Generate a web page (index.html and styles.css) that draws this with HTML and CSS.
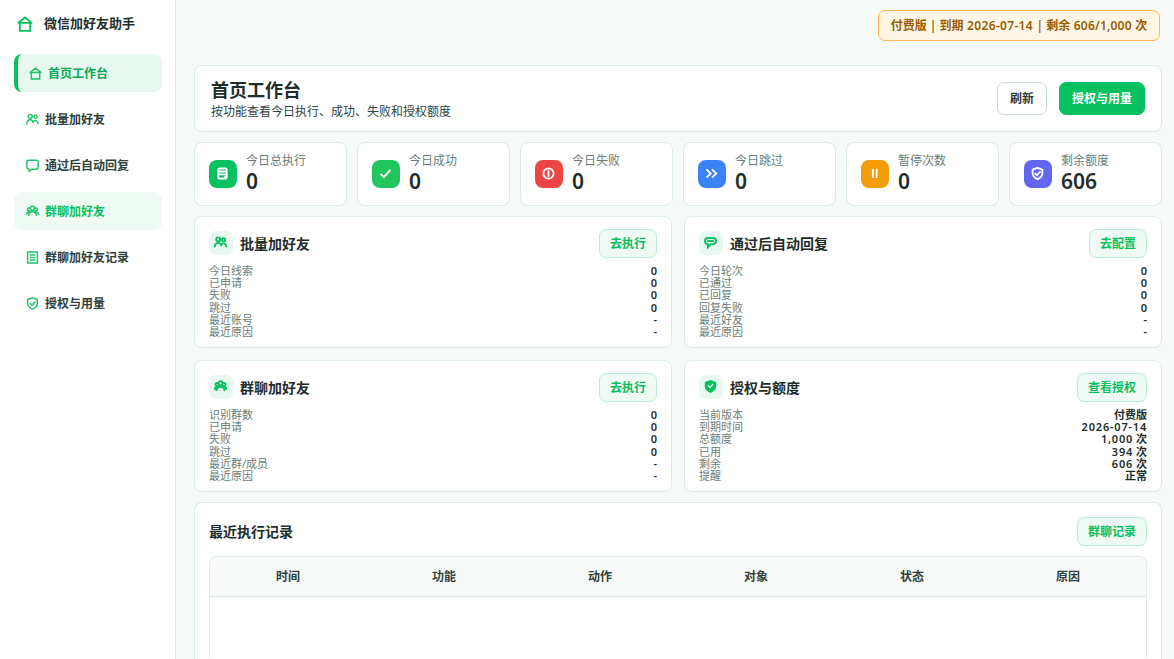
FILE: index.html
```html
<!DOCTYPE html>
<html lang="zh-CN">
<head>
<meta charset="utf-8">
<title>微信加好友助手</title>
<link rel="stylesheet" href="styles.css">
</head>
<body>
<svg class="defs" aria-hidden="true">
  <symbol id="home" viewBox="0 0 16 16"><path d="M.8 7.200 8 1.500l7.200 5.700M2.800 6.200v8.600h10.400V6.200M1.500 6.800h13"/></symbol>
  <symbol id="users" viewBox="0 0 16 16"><circle cx="5.200" cy="4.200" r="2.500"/><circle cx="11.800" cy="4.600" r="2"/><path d="M.9 13.800c.2-3.600 1.900-5.400 4.300-5.400 2 0 3.500 1.400 4.100 4M9.400 10c2.800-2 5.400-.4 5.700 3.800"/></symbol>
  <symbol id="chat" viewBox="0 0 16 16"><path d="M3.200 1.500h9.600Q15 1.500 15 3.700v6.600Q15 12.500 12.800 12.500H7l-3.200 2.800v-2.800Q1 12.500 1 10.300V3.700Q1 1.500 3.200 1.500Z"/></symbol>
  <symbol id="bubble" viewBox="0 0 16 16"><path d="M5 2.500h6Q14.800 2.500 14.800 6T11 10H8.200L4.800 14V10Q1.200 9.400 1.200 6T5 2.500ZM4 6.200h8"/></symbol>
  <symbol id="group" viewBox="0 0 16 16"><circle cx="8" cy="4" r="2.500"/><path d="M3 13.500c.2-3.500 2.100-5.200 5-5.200s4.800 1.700 5 5.200M5.500 6.600C3.800 7.800 1.600 6.900 1.800 5.200S4.400 3.400 5.400 4M10.500 6.600c1.700 1.200 3.900.3 3.700-1.400S11.600 3.400 10.600 4M.6 12c.3-2.500 1.900-3.700 4-3.300M15.400 12c-.3-2.500-1.900-3.700-4-3.300"/></symbol>
  <symbol id="list" viewBox="0 0 16 16"><path d="M2 1.300h12v13.400H2ZM4.500 5h7M4.500 8h7M4.500 11h7"/></symbol>
  <symbol id="shield" viewBox="0 0 16 16"><path d="M8 1l6 2.200v4.600c0 3.500-2.400 5.700-6 7.200-3.600-1.500-6-3.700-6-7.200V3.200ZM4.500 7.400l2.700 2.700 4.500-4.600"/></symbol>
  <symbol id="shield-solid" viewBox="0 0 16 16"><path fill="currentColor" stroke="none" d="M8 0l7 2.600v5.200c0 4-2.800 6.600-7 8.200-4.200-1.600-7-4.200-7-8.200V2.600Z"/><path stroke="#e8f7f0" stroke-width="1.600" d="M5 6.500l2.300 2.800L11 5.200"/></symbol>
  <symbol id="doc" viewBox="0 0 16 16"><rect x="2.800" y="1.800" width="10.400" height="12.400" rx="2"/><path d="M3.500 5.500h9M3.500 9h9M10 12h1.800"/></symbol>
  <symbol id="check" viewBox="0 0 16 16"><path d="M2 8.500l4 4L14 3.500"/></symbol>
  <symbol id="alert" viewBox="0 0 16 16"><circle cx="8" cy="8" r="6.300"/><path d="M8 4v8"/></symbol>
  <symbol id="skip" viewBox="0 0 16 16"><path d="M1.800 3 7 8l-5.200 5M8.600 3l5.200 5-5.200 5"/></symbol>
  <symbol id="pause" viewBox="0 0 16 16"><path d="M6 2.500v11M10.600 2.500v11"/></symbol>
</svg>
<div class="app">
  <aside class="sidebar">
    <div class="brand"><svg class="icon"><use href="#home"/></svg><span>微信加好友助手</span></div>
    <nav class="nav">
      <a class="nav-item active"><svg class="icon"><use href="#home"/></svg>首页工作台</a>
      <a class="nav-item"><svg class="icon"><use href="#users"/></svg>批量加好友</a>
      <a class="nav-item"><svg class="icon"><use href="#chat"/></svg>通过后自动回复</a>
      <a class="nav-item hover"><svg class="icon"><use href="#group"/></svg>群聊加好友</a>
      <a class="nav-item"><svg class="icon"><use href="#list"/></svg>群聊加好友记录</a>
      <a class="nav-item"><svg class="icon"><use href="#shield"/></svg>授权与用量</a>
    </nav>
  </aside>
  <main class="main">
    <div class="topbar"><div class="license">付费版 | 到期 <span class="date">2026-07-14</span> | 剩余 <span class="quota">606/1,000</span> 次</div></div>
    <header class="card page-head">
      <div><h1>首页工作台</h1><p>按功能查看今日执行、成功、失败和授权额度</p></div>
      <div class="actions"><button class="btn plain">刷新</button><button class="btn primary">授权与用量</button></div>
    </header>
    <section class="stats">
      <div class="card stat"><i class="badge green"><svg class="icon"><use href="#doc"/></svg></i><div><span>今日总执行</span><strong>0</strong></div></div>
      <div class="card stat"><i class="badge lime"><svg class="icon"><use href="#check"/></svg></i><div><span>今日成功</span><strong>0</strong></div></div>
      <div class="card stat"><i class="badge red"><svg class="icon"><use href="#alert"/></svg></i><div><span>今日失败</span><strong>0</strong></div></div>
      <div class="card stat"><i class="badge blue"><svg class="icon"><use href="#skip"/></svg></i><div><span>今日跳过</span><strong>0</strong></div></div>
      <div class="card stat"><i class="badge orange"><svg class="icon"><use href="#pause"/></svg></i><div><span>暂停次数</span><strong>0</strong></div></div>
      <div class="card stat"><i class="badge indigo"><svg class="icon"><use href="#shield"/></svg></i><div><span>剩余额度</span><strong>606</strong></div></div>
    </section>
    <section class="modules">
      <article class="card module">
        <div class="module-head"><i class="tile"><svg class="icon"><use href="#users"/></svg></i><h2>批量加好友</h2><button class="btn soft">去执行</button></div>
        <dl><dt>今日线索</dt><dd>0</dd><dt>已申请</dt><dd>0</dd><dt>失败</dt><dd>0</dd><dt>跳过</dt><dd>0</dd><dt>最近账号</dt><dd>-</dd><dt>最近原因</dt><dd>-</dd></dl>
      </article>
      <article class="card module">
        <div class="module-head"><i class="tile"><svg class="icon"><use href="#bubble"/></svg></i><h2>通过后自动回复</h2><button class="btn soft">去配置</button></div>
        <dl><dt>今日轮次</dt><dd>0</dd><dt>已通过</dt><dd>0</dd><dt>已回复</dt><dd>0</dd><dt>回复失败</dt><dd>0</dd><dt>最近好友</dt><dd>-</dd><dt>最近原因</dt><dd>-</dd></dl>
      </article>
      <article class="card module">
        <div class="module-head"><i class="tile"><svg class="icon"><use href="#group"/></svg></i><h2>群聊加好友</h2><button class="btn soft">去执行</button></div>
        <dl><dt>识别群数</dt><dd>0</dd><dt>已申请</dt><dd>0</dd><dt>失败</dt><dd>0</dd><dt>跳过</dt><dd>0</dd><dt>最近群/成员</dt><dd>-</dd><dt>最近原因</dt><dd>-</dd></dl>
      </article>
      <article class="card module">
        <div class="module-head"><i class="tile"><svg class="icon"><use href="#shield-solid"/></svg></i><h2>授权与额度</h2><button class="btn soft">查看授权</button></div>
        <dl><dt>当前版本</dt><dd>付费版</dd><dt>到期时间</dt><dd><span class="num">2026-07-14</span></dd><dt>总额度</dt><dd><span class="num">1,000</span> 次</dd><dt>已用</dt><dd><span class="num">394</span> 次</dd><dt>剩余</dt><dd><span class="num">606</span> 次</dd><dt>提醒</dt><dd>正常</dd></dl>
      </article>
    </section>
    <section class="card records">
      <div class="records-head"><h2>最近执行记录</h2><button class="btn soft">群聊记录</button></div>
      <div class="table"><div class="thead"><span>时间</span><span>功能</span><span>动作</span><span>对象</span><span>状态</span><span>原因</span></div></div>
    </section>
  </main>
</div>
</body>
</html>
```

FILE: styles.css
```css
* { box-sizing: border-box; }
html, body { height: 100%; }
body { margin: 0; overflow: hidden; background: #f6faf8; color: #1f2d2a; font: 12px/16px "Noto Sans", "Noto Sans CJK SC", sans-serif; }
h1, h2, p, dl, dd { margin: 0; }
.defs { position: absolute; width: 0; height: 0; }
.icon { display: block; flex: none; width: 12px; height: 12px; fill: none; stroke: currentColor; stroke-width: 1.8; }

.app { display: flex; height: 659px; }
.sidebar { flex: none; width: 176px; padding: 0 13px 0 14px; background: #fff; border-right: 1px solid #dcebe5; }
.brand { display: flex; align-items: center; gap: 11px; height: 46px; padding: 0 0 0 3px; font-size: 13px; font-weight: 600; }
.brand .icon { width: 16px; height: 16px; margin-top: 2px; color: #07c160; }
.nav { display: flex; flex-direction: column; gap: 8px; margin-top: 8px; }
.nav-item { display: flex; align-items: center; gap: 6px; height: 38px; padding: 2px 0 0 12px; border-radius: 8px; font-weight: 600; color: #2f403b; }
.nav-item .icon { width: 13px; height: 13px; margin-top: -2px; margin-left: -.5px; margin-right: .5px; color: #1fc46c; }
.nav-item.active { padding-left: 11px; border-left: 4px solid #07c160; background: #e8f7f0; color: #05a854; }
.nav-item.active .icon { margin-top: -1px; }
.nav-item.hover { background: #f0faf5; color: #07c160; }

.main { flex: 1; min-width: 0; padding: 10px 12px 0 18px; }
.card { background: #fff; border: 1px solid #dcebe5; border-radius: 8px; }
.topbar { display: flex; justify-content: flex-end; height: 55px; padding-right: 2px; }
.license { display: flex; align-items: center; justify-content: center; gap: 3.5px; width: 282px; height: 31px; border: 1px solid #ffb84d; border-radius: 7px; background: #fff7e6; color: #9a5b00; font-weight: 600; white-space: nowrap; }
.date { letter-spacing: .33px; }
.quota { letter-spacing: .2px; }
.btn { display: flex; align-items: center; justify-content: center; padding: 0; border: 1px solid; border-radius: 7px; font: 600 12px/16px "Noto Sans", "Noto Sans CJK SC", sans-serif; }
.plain { width: 50px; height: 33px; background: #fff; border-color: #c8dcd5; color: #2f403b; }
.primary { width: 86px; height: 33px; background: #07c160; border-color: #07c160; color: #fff; }
.soft { height: 29px; padding: 0 10px; margin-left: auto; border-color: #c0ebd4; background: #f0faf5; color: #07c160; }

.page-head { display: flex; justify-content: space-between; align-items: center; height: 67px; padding: 0 16px; }
.page-head h1 { font-size: 18px; line-height: 24px; font-weight: 700; }
.page-head p { line-height: 16px; padding-top: 2px; color: #33443f; }
.actions { display: flex; gap: 12px; }

.stats { display: grid; grid-template-columns: repeat(6, 1fr); gap: 10px; margin-top: 10px; }
.stat { display: flex; gap: 9px; height: 64px; padding: 0 14px; align-items: center; }
.badge { display: grid; place-items: center; flex: none; width: 28px; height: 28px; border-radius: 8px; color: #fff; }
.badge .icon { width: 13px; height: 13px; margin: -1px 0 0 -1px; stroke-width: 2.3; }
.green { background: #07c160; }
.lime { background: #22c55e; }
.red { background: #ef4444; }
.blue { background: #3b82f6; }
.orange { background: #f59e0b; }
.indigo { background: #6366f1; }
.stat span { display: block; line-height: 18px; color: #6b7d77; }
.stat strong { display: block; font-size: 21px; font-weight: 600; line-height: 22px; padding-bottom: 4px; }

.modules { display: grid; grid-template-columns: 1fr 1fr; gap: 12px; margin-top: 10px; }
.module { height: 132px; padding: 12px 14px; }
.module-head { display: flex; align-items: center; height: 29px; }
.tile { display: grid; place-items: center; width: 24px; height: 24px; margin: -1px 7px 0 0; border-radius: 7px; background: #e8f7f0; color: #07c160; }
.tile .icon { width: 13px; height: 13px; margin: -1px 0 0 -1px; stroke-width: 2.3; }
h2 { font-size: 14px; line-height: 20px; font-weight: 600; }
dl { display: grid; grid-template-columns: 1fr auto; grid-auto-rows: 12.2px; margin-top: 7px; font-size: 11px; line-height: 12.2px; }
dt { color: #6b7d77; }
dd { text-align: right; font-weight: 600; }
.num { letter-spacing: .8px; }

.records { height: 157px; margin-top: 10px; padding: 14px 14px 0; border-bottom: 0; border-radius: 8px 8px 0 0; }
.records-head { display: flex; align-items: center; }
.table { height: 102px; margin-top: 10px; border: 1px solid #dcebe5; border-bottom: 0; border-radius: 7px 7px 0 0; overflow: hidden; }
.thead { display: grid; grid-template-columns: repeat(6, 1fr); height: 40px; align-items: center; text-align: center; border-bottom: 1px solid #dcebe5; background: #f7faf9; color: #2f403b; font-weight: 600; }
```
